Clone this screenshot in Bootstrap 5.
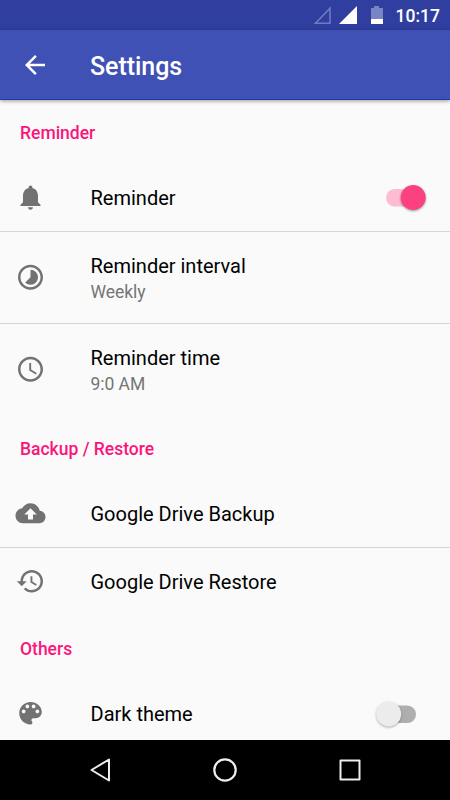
<!DOCTYPE html>
<html lang="en">
<head>
<meta charset="utf-8">
<meta name="viewport" content="width=device-width, initial-scale=1">
<title>Settings</title>
<link href="https://cdn.jsdelivr.net/npm/bootstrap@5.3.0/dist/css/bootstrap.min.css" rel="stylesheet">
<style>
body{font-family:Roboto,sans-serif;background:#fafafa;height:800px;overflow:hidden;color:#000}
svg{display:block;flex:none}
.status-bar{height:30px;background:#303f9f;padding:2px 10px 0 313px;font-size:17.5px;font-weight:500;line-height:28px}
.status-bar svg{margin-top:-2px}
.app-bar{height:70px;background:#3f51b5;border-bottom:1px solid #1f3aa5;padding-left:20px;box-shadow:0 1px 4px rgba(0,0,0,.4);z-index:1}
.app-title{font-size:25px;font-weight:500;line-height:30px;margin-left:40px;padding-top:4px;letter-spacing:-.05px}
.section-title{height:64px;padding:22px 20px 0;font-size:17.5px;line-height:22px;font-weight:500;color:#fc147c}
.list-group-flush>.setting{height:68px;padding:0 24px 0 15px;border:0;border-bottom:1px solid #d6d6d6;background:transparent;color:#000}
.list-group-flush>.setting.tall{height:92px}
.list-group-flush>.setting.last{padding-bottom:1px}
.setting>svg{width:30px;height:30px;fill:#727272;margin-top:-1px;overflow:visible}
.setting>svg path{transform:translate(.4px,.2px)}
.label{margin-left:45.5px;font-size:20px;line-height:26px;padding-top:1px}
.tall .label{padding-top:3px}
.value{font-size:17.5px;line-height:26px;color:#757575;letter-spacing:-.05px}
.toggle svg{overflow:visible}
.nav-bar{height:60px;padding:0 87px}
</style>
</head>
<body class="d-flex flex-column">
<div class="status-bar d-flex align-items-center text-white flex-shrink-0">
  <svg width="76" height="30" viewBox="0 0 76 30">
    <path d="M2.500 23.200 17 8.200v15Z" fill="none" stroke="#6f7abf" stroke-width="1.600"/>
    <path d="M26 24 44 6v18Z" fill="#fff"/>
    <path d="M61 6h5v2h4v11H58V8h3Z" fill="#7984c4"/>
    <path d="M58 19h12v5H58Z" fill="#fff"/>
  </svg>
  <span class="ms-auto">10:17</span>
</div>
<header class="app-bar d-flex align-items-center text-white flex-shrink-0">
  <svg width="30" height="30" viewBox="0 0 24 24" fill="#fff"><path d="M20 11H7.830l5.590-5.590L12 4l-8 8 8 8 1.410-1.410L7.830 13H20v-2z"/></svg>
  <h1 class="app-title mb-0">Settings</h1>
</header>
<main class="flex-grow-1 overflow-hidden">
  <h2 class="section-title mb-0">Reminder</h2>
  <div class="list-group list-group-flush">
    <div class="list-group-item setting d-flex align-items-center">
      <svg viewBox="0 0 24 24"><path d="M12 22c1.100 0 2-.9 2-2h-4c0 1.100.89 2 2 2zm6-6v-5c0-3.070-1.640-5.640-4.500-6.320V4c0-.83-.67-1.500-1.500-1.500s-1.500.67-1.500 1.500v.68C7.630 5.360 6 7.920 6 11v5l-2 2v1h16v-1l-2-2z"/></svg>
      <div class="label">Reminder</div>
      <span class="toggle ms-auto"><svg width="50" height="30" viewBox="0 0 50 30"><rect x="10" y="6" width="34" height="17.500" rx="8.700" fill="#fdbcd2"/><circle cx="37.200" cy="14.500" r="12.500" fill="#fb4180" filter="drop-shadow(0 1.500px 1.200px rgba(0,0,0,.4))"/></svg></span>
    </div>
    <div class="list-group-item setting tall d-flex align-items-center">
      <svg viewBox="0 0 24 24"><path d="M16.240 7.760C15.070 6.590 13.540 6 12 6v6l-4.240 4.240c2.340 2.340 6.140 2.340 8.490 0 2.340-2.340 2.340-6.140-.01-8.480zM12 2C6.480 2 2 6.480 2 12s4.480 10 10 10 10-4.480 10-10S17.520 2 12 2zm0 18c-4.420 0-8-3.580-8-8s3.580-8 8-8 8 3.580 8 8-3.580 8-8 8z"/></svg>
      <div class="label">Reminder interval<div class="value">Weekly</div></div>
    </div>
    <div class="list-group-item setting tall last d-flex align-items-center">
      <svg viewBox="0 0 24 24"><path d="M11.990 2C6.470 2 2 6.480 2 12s4.470 10 9.990 10C17.520 22 22 17.520 22 12S17.520 2 11.990 2zM12 20c-4.420 0-8-3.580-8-8s3.580-8 8-8 8 3.580 8 8-3.580 8-8 8zm.5-13H11v6l5.250 3.150.75-1.230-4.500-2.670z"/></svg>
      <div class="label">Reminder time<div class="value">9:0 AM</div></div>
    </div>
  </div>
  <h2 class="section-title mb-0">Backup / Restore</h2>
  <div class="list-group list-group-flush">
    <div class="list-group-item setting d-flex align-items-center">
      <svg viewBox="0 0 24 24"><path d="M19.350 10.040C18.670 6.590 15.640 4 12 4 9.110 4 6.600 5.640 5.350 8.040 2.340 8.360 0 10.910 0 14c0 3.310 2.690 6 6 6h13c2.760 0 5-2.240 5-5 0-2.640-2.050-4.780-4.650-4.960zM14 13v4h-4v-4H7l5-5 5 5h-3z"/></svg>
      <div class="label">Google Drive Backup</div>
    </div>
    <div class="list-group-item setting last d-flex align-items-center">
      <svg viewBox="0 0 24 24"><path d="M13 3c-4.970 0-9 4.030-9 9H1l3.890 3.890.07.14L9 12H6c0-3.870 3.130-7 7-7s7 3.130 7 7-3.130 7-7 7c-1.930 0-3.680-.79-4.940-2.060l-1.420 1.420C8.270 19.990 10.510 21 13 21c4.970 0 9-4.030 9-9s-4.030-9-9-9zm-1 5v5l4.280 2.540.72-1.210-3.500-2.080V8H12z"/></svg>
      <div class="label">Google Drive Restore</div>
    </div>
  </div>
  <h2 class="section-title mb-0">Others</h2>
  <div class="list-group list-group-flush">
    <div class="list-group-item setting last d-flex align-items-center">
      <svg viewBox="0 0 24 24"><path d="M12 3c-4.970 0-9 4.030-9 9s4.030 9 9 9c.83 0 1.500-.67 1.500-1.500 0-.39-.15-.74-.39-1.010-.23-.26-.38-.61-.38-.99 0-.83.67-1.500 1.500-1.500H16c2.760 0 5-2.240 5-5 0-4.420-4.030-8-9-8zm-5.500 9c-.83 0-1.500-.67-1.500-1.500S5.670 9 6.500 9 8 9.670 8 10.500 7.330 12 6.500 12zm3-4C8.670 8 8 7.330 8 6.500S8.670 5 9.500 5s1.500.67 1.500 1.500S10.330 8 9.500 8zm5 0c-.83 0-1.500-.67-1.500-1.500S13.670 5 14.500 5s1.500.67 1.500 1.500S15.330 8 14.500 8zm3 4c-.83 0-1.500-.67-1.500-1.500S16.670 9 17.500 9s1.500.67 1.500 1.500-.67 1.500-1.500 1.500z"/></svg>
      <div class="label">Dark theme</div>
      <span class="toggle ms-auto"><svg width="50" height="30" viewBox="0 0 50 30"><rect x="7" y="6.500" width="33" height="17.500" rx="8.700" fill="#aeaeae"/><circle cx="12.700" cy="15" r="12.500" fill="#ececec" filter="drop-shadow(0 1.500px 1.200px rgba(0,0,0,.3))"/></svg></span>
    </div>
  </div>
</main>
<nav class="nav-bar bg-black d-flex justify-content-between align-items-center flex-shrink-0">
  <svg width="26" height="26" viewBox="0 0 26 26" fill="none" stroke="#eee" stroke-width="2" stroke-linejoin="round"><path d="M22 2.500v21L4.500 13Z"/></svg>
  <svg width="26" height="26" viewBox="0 0 26 26" fill="none" stroke="#eee" stroke-width="2.200"><circle cx="13" cy="13" r="10.700"/></svg>
  <svg width="26" height="26" viewBox="0 0 26 26" fill="none" stroke="#eee" stroke-width="2" stroke-linejoin="round"><path d="M3.500 3.500h19v19h-19Z"/></svg>
</nav>
<script src="https://cdn.jsdelivr.net/npm/bootstrap@5.3.0/dist/js/bootstrap.bundle.min.js"></script>
</body>
</html>
